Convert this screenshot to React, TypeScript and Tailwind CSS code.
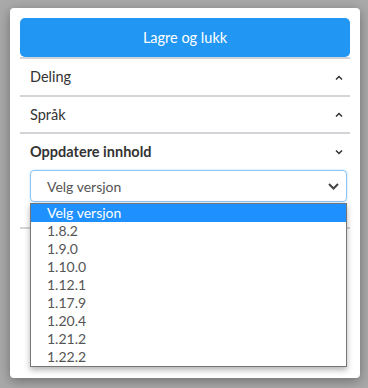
import React from 'react';

const versions = ['1.8.2', '1.9.0', '1.10.0', '1.12.1', '1.17.9', '1.20.4', '1.21.2', '1.22.2'];

const Chevron: React.FC<{ up?: boolean }> = ({ up }) => (
  <svg width="8" height="5" viewBox="0 0 8 5" className="text-[#333]">
    {up ? (
      <path d="M1 4.5 L4 1.5 L7 4.5" fill="none" stroke="currentColor" strokeWidth="1.5" />
    ) : (
      <path d="M1 0.5 L4 3.5 L7 0.5" fill="none" stroke="currentColor" strokeWidth="1.5" />
    )}
  </svg>
);

const Divider = () => <div className="h-[2px] bg-[#d3d4d8]" />;

export default function App() {
  return (
    <div className="min-h-screen bg-[#a9a9a9] pl-[10px] pt-[8px] font-['Lato','Liberation_Sans',sans-serif]">
      <div className="w-[350px] h-[370px] bg-white rounded-[4px] shadow-[0_3px_12px_rgba(0,0,0,0.35)] p-[10px]">
        <button
          type="button"
          className="w-full h-[39px] rounded-[5px] bg-[#2196f3] text-white text-[14.5px]"
        >
          Lagre og lukk
        </button>
        <Divider />
        <div className="h-[36px] flex items-center justify-between pl-[10px] pr-[7px] text-[14.5px] text-[#333]">
          <span>Deling</span>
          <Chevron up />
        </div>
        <Divider />
        <div className="h-[35px] flex items-center justify-between pl-[10px] pr-[7px] text-[14.5px] text-[#333]">
          <span>Språk</span>
          <Chevron up />
        </div>
        <Divider />
        <div className="pb-[25px]">
          <div className="h-[36px] flex items-center justify-between pl-[10px] pr-[7px] text-[14.5px] font-bold text-[#333]">
            <span>Oppdatere innhold</span>
            <Chevron />
          </div>
          <div className="relative ml-[10px] w-[317px]">
            <div className="h-[32px] rounded-[4px] border border-[#8cc4f5] shadow-[0_0_2px_rgba(33,150,243,0.4)] flex items-center justify-between pl-[16px] pr-[7px] text-[14px] text-[#555]">
              <span>Velg versjon</span>
              <svg width="11" height="7" viewBox="0 0 11 7">
                <path d="M1 1 L5.5 5.5 L10 1" fill="none" stroke="#444" strokeWidth="2" />
              </svg>
            </div>
            <div className="absolute left-0 top-[33px] w-[317px] bg-white border border-[#767676] shadow-[0_3px_6px_rgba(0,0,0,0.3)] z-10 text-[14px]">
              <div className="h-[18px] leading-[18px] pl-[16px] bg-[#1e90ff] text-white">Velg versjon</div>
              {versions.map((v) => (
                <div key={v} className="h-[18px] leading-[18px] pl-[16px] text-[#555]">
                  {v}
                </div>
              ))}
            </div>
          </div>
        </div>
        <Divider />
      </div>
    </div>
  );
}
